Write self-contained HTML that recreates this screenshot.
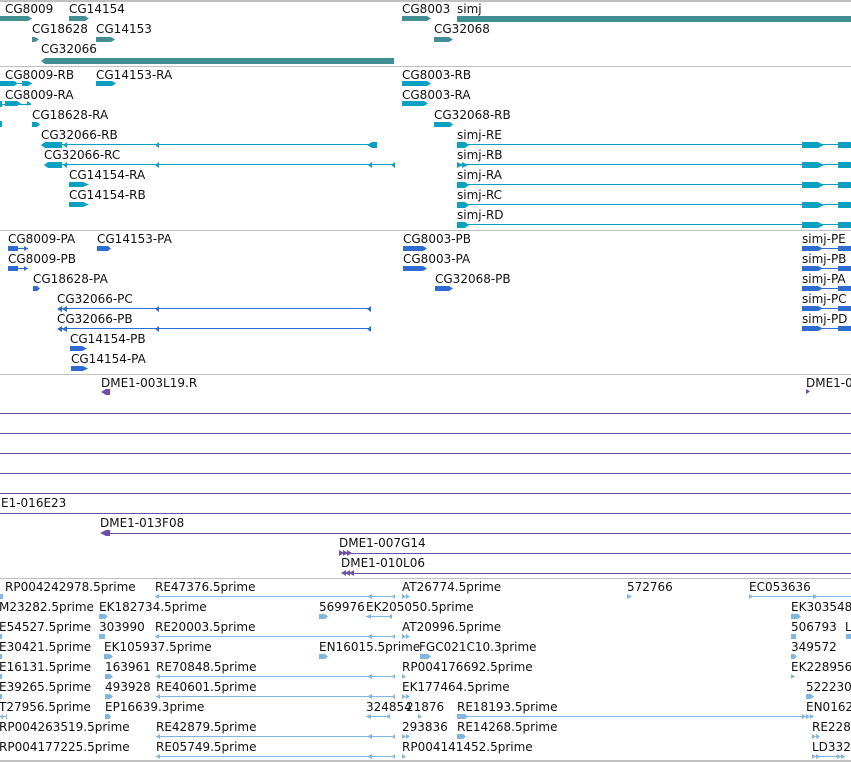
<!DOCTYPE html>
<html><head><meta charset="utf-8"><style>
html,body{margin:0;padding:0;background:#fff;}
svg{display:block;}
text{font-family:"DejaVu Sans","Liberation Sans",sans-serif;font-size:12px;fill:#111;}
.s{fill:#c0c0c0}
.t{fill:#418f93}.c{fill:#0aa0c1}.b{fill:#2e6bd3}.p{fill:#6f50a8}.l{fill:#80b6df}
</style></head><body>
<svg width="851" height="762" viewBox="0 0 851 762" xmlns="http://www.w3.org/2000/svg">
<!-- separators -->
<rect class="s" x="0" y="0" width="851" height="2"/>
<rect class="s" x="0" y="66" width="851" height="1"/>
<rect class="s" x="0" y="230" width="851" height="1"/>
<rect class="s" x="0" y="374" width="851" height="1"/>
<rect class="s" x="0" y="578" width="851" height="1"/>
<rect class="s" x="0" y="760" width="851" height="2"/>

<!-- TRACK 1 genes -->
<text x="5" y="13">CG8009</text><polygon class="t" points="0,16 28,16 32,18.5 28,21 0,21"/>
<text x="69" y="13">CG14154</text><polygon class="t" points="69,16 85,16 89,18.5 85,21 69,21"/>
<text x="402" y="13">CG8003</text><polygon class="t" points="402,16 427,16 431,18.5 427,21 402,21"/>
<text x="457" y="13">simj</text><rect class="t" x="457" y="16" width="394" height="6"/>
<text x="32" y="33">CG18628</text><polygon class="t" points="32,37 35,37 39,39.5 35,42 32,42"/>
<text x="96" y="33">CG14153</text><polygon class="t" points="96,37 111,37 115,39.5 111,42 96,42"/>
<text x="434" y="33">CG32068</text><polygon class="t" points="434,37 449,37 453,39.5 449,42 434,42"/>
<text x="41" y="53">CG32066</text><polygon class="t" points="45,58 394,58 394,64 45,64 41,61"/>

<!-- TRACK 2 transcripts -->
<g class="c">
<rect x="0" y="83" width="32" height="1"/><rect x="0" y="81" width="14" height="5"/><polygon points="14,81 18,83.5 14,86"/><rect x="22" y="81" width="6" height="5"/><polygon points="28,81 32,83.5 28,86"/>
<rect x="96" y="81" width="16" height="5"/><polygon points="112,81 116,83.5 112,86"/>
<rect x="402" y="81" width="25" height="5"/><polygon points="427,81 431,83.5 427,86"/>
<rect x="0" y="104" width="31" height="1"/><rect x="0" y="101" width="2" height="6"/><rect x="5" y="101" width="12" height="5"/><polygon points="17,101 21,103.5 17,106"/><polygon points="27,101 31,103.5 27,106"/>
<rect x="402" y="101" width="22" height="5"/><polygon points="424,101 428,103.5 424,106"/>
<rect x="0" y="121" width="2" height="6"/><rect x="32" y="122" width="5" height="5"/><polygon points="37,122 40,124.5 37,127"/>
<rect x="434" y="122" width="16" height="5"/><polygon points="450,122 453,124.5 450,127"/>
<!-- CG32066-RB -->
<polygon points="45,142 62,142 62,148 45,148 41,145"/><rect x="62" y="144" width="315" height="1"/><polygon points="67,142 63,145 67,148"/><polygon points="159,142 155,145 159,148"/><polygon points="372,142 377,142 377,148 372,148 367,145"/>
<!-- CG32066-RC -->
<polygon points="48,162 62,162 62,168 48,168 44,165"/><rect x="62" y="164" width="333" height="1"/><polygon points="67,162 63,165 67,168"/><polygon points="159,162 155,165 159,168"/><polygon points="372,162 368,165 372,168"/><polygon points="395,162 391,165 395,168"/>
<rect x="69" y="182" width="14" height="5"/><polygon points="83,182 89,184.5 83,187"/>
<rect x="69" y="202" width="14" height="5"/><polygon points="83,202 89,204.5 83,207"/>
</g>
<g class="c">
<rect x="457" y="144" width="394" height="1"/><rect x="457" y="142" width="8" height="6"/><polygon points="465,142 469,145 465,148"/><rect x="802" y="142" width="16" height="6"/><polygon points="818,142 824,145 818,148"/><rect x="838" y="142" width="13" height="6"/>
<rect x="457" y="164" width="394" height="1"/><polygon points="457,162 463,165 457,168"/><polygon points="462,162 468,165 462,168"/><rect x="802" y="162" width="16" height="6"/><polygon points="818,162 824,165 818,168"/><rect x="838" y="162" width="13" height="6"/>
<rect x="457" y="184" width="394" height="1"/><rect x="457" y="182" width="8" height="6"/><polygon points="465,182 469,185 465,188"/><rect x="802" y="182" width="16" height="6"/><polygon points="818,182 824,185 818,188"/><rect x="838" y="182" width="13" height="6"/>
<rect x="457" y="204" width="394" height="1"/><rect x="457" y="202" width="8" height="6"/><polygon points="465,202 469,205 465,208"/><rect x="802" y="202" width="16" height="6"/><polygon points="818,202 824,205 818,208"/><rect x="838" y="202" width="13" height="6"/>
<rect x="457" y="224" width="394" height="1"/><rect x="457" y="222" width="8" height="6"/><polygon points="465,222 469,225 465,228"/><rect x="802" y="222" width="16" height="6"/><polygon points="818,222 824,225 818,228"/><rect x="838" y="222" width="13" height="6"/>
</g>
<text x="5" y="79">CG8009-RB</text><text x="96" y="79">CG14153-RA</text><text x="402" y="79">CG8003-RB</text>
<text x="5" y="99">CG8009-RA</text><text x="402" y="99">CG8003-RA</text>
<text x="32" y="119">CG18628-RA</text><text x="434" y="119">CG32068-RB</text>
<text x="41" y="139">CG32066-RB</text><text x="457" y="139">simj-RE</text>
<text x="44" y="159">CG32066-RC</text><text x="457" y="159">simj-RB</text>
<text x="69" y="179">CG14154-RA</text><text x="457" y="179">simj-RA</text>
<text x="69" y="199">CG14154-RB</text><text x="457" y="199">simj-RC</text>
<text x="457" y="219">simj-RD</text>

<!-- TRACK 3 proteins -->
<g class="b">
<rect x="8" y="248" width="20" height="1"/><rect x="8" y="246" width="10" height="5"/><polygon points="24,246 28,248.5 24,251"/>
<rect x="97" y="246" width="11" height="5"/><polygon points="108,246 111,248.5 108,251"/>
<rect x="403" y="246" width="20" height="5"/><polygon points="423,246 427,248.5 423,251"/>
<rect x="8" y="268" width="20" height="1"/><rect x="8" y="266" width="10" height="5"/><polygon points="24,266 28,268.5 24,271"/>
<rect x="403" y="266" width="20" height="5"/><polygon points="423,266 427,268.5 423,271"/>
<rect x="33" y="286" width="4" height="5"/><polygon points="37,286 40,288.5 37,291"/>
<rect x="435" y="286" width="14" height="5"/><polygon points="449,286 453,288.5 449,291"/>
<polygon points="57,309 62,306 62,312"/><polygon points="62,309 67,306 67,312"/><rect x="62" y="308" width="309" height="1"/><polygon points="155,309 159,306 159,312"/><polygon points="367,309 371,306 371,312"/>
<polygon points="57,329 62,326 62,332"/><polygon points="62,329 67,326 67,332"/><rect x="62" y="328" width="309" height="1"/><polygon points="155,329 159,326 159,332"/><polygon points="367,329 371,326 371,332"/>
<rect x="70" y="346" width="12" height="5"/><polygon points="82,346 87,348.5 82,351"/>
<rect x="71" y="366" width="12" height="5"/><polygon points="83,366 88,368.5 83,371"/>
</g>
<g class="b">
<rect x="802" y="248" width="49" height="1"/><rect x="802" y="246" width="16" height="5"/><polygon points="818,246 823,248.5 818,251"/><rect x="838" y="246" width="13" height="5"/>
<rect x="802" y="268" width="49" height="1"/><rect x="802" y="266" width="16" height="5"/><polygon points="818,266 823,268.5 818,271"/><rect x="838" y="266" width="13" height="5"/>
<rect x="802" y="288" width="49" height="1"/><rect x="802" y="286" width="16" height="5"/><polygon points="818,286 823,288.5 818,291"/><rect x="838" y="286" width="13" height="5"/>
<rect x="802" y="308" width="49" height="1"/><rect x="802" y="306" width="16" height="5"/><polygon points="818,306 823,308.5 818,311"/><rect x="838" y="306" width="13" height="5"/>
<rect x="802" y="328" width="49" height="1"/><rect x="802" y="326" width="16" height="5"/><polygon points="818,326 823,328.5 818,331"/><rect x="838" y="326" width="13" height="5"/>
</g>
<text x="8" y="243">CG8009-PA</text><text x="97" y="243">CG14153-PA</text><text x="403" y="243">CG8003-PB</text><text x="802" y="243">simj-PE</text>
<text x="8" y="263">CG8009-PB</text><text x="403" y="263">CG8003-PA</text><text x="802" y="263">simj-PB</text>
<text x="33" y="283">CG18628-PA</text><text x="435" y="283">CG32068-PB</text><text x="802" y="283">simj-PA</text>
<text x="57" y="303">CG32066-PC</text><text x="802" y="303">simj-PC</text>
<text x="57" y="323">CG32066-PB</text><text x="802" y="323">simj-PD</text>
<text x="70" y="343">CG14154-PB</text>
<text x="71" y="363">CG14154-PA</text>

<!-- TRACK 4 BACs -->
<g class="p">
<polygon points="101,392 106,389 110,389 110,395 106,395"/>
<polygon points="806,389 810,391.5 806,394"/>
<rect x="0" y="413" width="851" height="1"/>
<rect x="0" y="433" width="851" height="1"/>
<rect x="0" y="453" width="851" height="1"/>
<rect x="0" y="473" width="851" height="1"/>
<rect x="0" y="493" width="851" height="1"/>
<rect x="0" y="513" width="851" height="1"/>
<rect x="104" y="533" width="747" height="1"/><polygon points="100,533 106,530 110,530 110,536 106,536"/>
<rect x="339" y="553" width="512" height="1"/><polygon points="339,550 344,553 339,556"/><polygon points="343,550 348,553 343,556"/><polygon points="347,550 352,553 347,556"/>
<rect x="344" y="573" width="507" height="1"/><polygon points="341,573 346,570 346,576"/><polygon points="345,573 350,570 350,576"/><polygon points="349,573 354,570 354,576"/>
</g>
<text x="101" y="387">DME1-003L19.R</text><text x="806" y="387">DME1-0</text>
<text x="1" y="507">E1-016E23</text>
<text x="100" y="527">DME1-013F08</text>
<text x="339" y="547">DME1-007G14</text>
<text x="341" y="567">DME1-010L06</text>

<!-- TRACK 5 ESTs -->
<g class="l">
<!-- long lines with arrows (RE rows) -->
<rect x="0" y="594" width="3" height="5"/>
<rect x="155" y="596" width="240" height="1"/><polygon points="155,596.5 159,594 159,599"/><polygon points="367,596.5 372,594 372,599"/><polygon points="392,596.5 395,594 395,599"/>
<polygon points="402,594 406,596.5 402,599"/><polygon points="406,594 410,596.5 406,599"/>
<polygon points="627,594 632,596.5 627,599"/>
<rect x="749" y="596" width="102" height="1"/><polygon points="749,594 753,596.5 749,599"/><polygon points="813,594 818,596.5 813,599"/>
<polygon points="99,614 105,614 108,616.5 105,619 99,619"/>
<polygon points="319,614 325,614 328,616.5 325,619 319,619"/>
<rect x="366" y="616" width="26" height="1"/><polygon points="366,616.5 371,614 371,619"/><polygon points="392,614 392,619 388,616.5"/>
<polygon points="791,614 798,614 801,616.5 798,619 791,619"/>
<rect x="0" y="634" width="2" height="5"/>
<rect x="99" y="634" width="6" height="5"/>
<rect x="155" y="636" width="240" height="1"/><polygon points="155,636.5 159,634 159,639"/><polygon points="367,636.5 372,634 372,639"/><polygon points="392,636.5 395,634 395,639"/>
<polygon points="402,634 406,636.5 402,639"/><polygon points="406,634 410,636.5 406,639"/>
<rect x="791" y="634" width="5" height="5"/><rect x="846" y="634" width="5" height="5"/>
<rect x="0" y="654" width="2" height="5"/>
<polygon points="104,654 110,654 113,656.5 110,659 104,659"/>
<polygon points="319,654 325,654 328,656.5 325,659 319,659"/>
<polygon points="420,654 428,654 431,656.5 428,659 420,659"/>
<polygon points="791,654 794,654 797,656.5 794,659 791,659"/>
<rect x="0" y="674" width="2" height="5"/>
<polygon points="105,674 110,674 113,676.5 110,679 105,679"/>
<rect x="156" y="676" width="239" height="1"/><polygon points="156,676.5 160,674 160,679"/><polygon points="367,676.5 372,674 372,679"/><polygon points="392,676.5 395,674 395,679"/>
<polygon points="402,674 406,676.5 402,679"/>
<polygon points="791,674 795,676.5 791,679"/>
<rect x="0" y="694" width="2" height="5"/>
<polygon points="105,694 110,694 113,696.5 110,699 105,699"/>
<rect x="156" y="696" width="239" height="1"/><polygon points="156,696.5 160,694 160,699"/><polygon points="367,696.5 372,694 372,699"/><polygon points="392,696.5 395,694 395,699"/>
<polygon points="402,694 406,696.5 402,699"/><polygon points="406,694 410,696.5 406,699"/>
<polygon points="806,694 811,694 814,696.5 811,699 806,699"/>
<rect x="0" y="716" width="6" height="1"/><polygon points="0,716.5 3,714 3,719"/><rect x="6" y="714" width="1" height="5"/>
<polygon points="105,714 109,714 111,716.5 109,719 105,719"/>
<rect x="366" y="716" width="24" height="1"/><polygon points="366,716.5 371,714 371,719"/><polygon points="390,714 390,719 386,716.5"/>
<polygon points="418,714 422,716.5 418,719"/>
<rect x="457" y="716" width="349" height="1"/><polygon points="457,714 465,714 468,716.5 465,719 457,719"/><polygon points="802,714 806,716.5 802,719"/><polygon points="806,714 810,716.5 806,719"/><polygon points="810,714 814,716.5 810,719"/>
<rect x="156" y="736" width="239" height="1"/><polygon points="156,736.5 160,734 160,739"/><polygon points="367,736.5 372,734 372,739"/><polygon points="392,736.5 395,734 395,739"/>
<polygon points="402,734 406,736.5 402,739"/><polygon points="406,734 410,736.5 406,739"/>
<polygon points="457,734 463,734 466,736.5 463,739 457,739"/>
<polygon points="812,734 816,736.5 812,739"/><polygon points="816,734 820,736.5 816,739"/>
<rect x="156" y="756" width="239" height="1"/><polygon points="156,756.5 160,754 160,759"/><polygon points="367,756.5 372,754 372,759"/><polygon points="392,756.5 395,754 395,759"/>
<polygon points="402,754 406,756.5 402,759"/>
<rect x="812" y="756" width="33" height="1"/><polygon points="812,754 816,756.5 812,759"/><polygon points="816,754 820,756.5 816,759"/><polygon points="837,754 841,756.5 837,759"/><polygon points="841,754 845,756.5 841,759"/>
</g>
<text x="5" y="591">RP004242978.5prime</text><text x="155" y="591">RE47376.5prime</text><text x="402" y="591">AT26774.5prime</text><text x="627" y="591">572766</text><text x="749" y="591">EC053636</text>
<text x="-1" y="611">M23282.5prime</text><text x="99" y="611">EK182734.5prime</text><text x="319" y="611">569976</text><text x="366" y="611">EK205050.5prime</text><text x="791" y="611">EK303548</text>
<text x="-1" y="631">E54527.5prime</text><text x="99" y="631">303990</text><text x="155" y="631">RE20003.5prime</text><text x="402" y="631">AT20996.5prime</text><text x="791" y="631">506793</text><text x="845" y="631">L</text>
<text x="-1" y="651">E30421.5prime</text><text x="104" y="651">EK105937.5prime</text><text x="319" y="651">EN16015.5prime</text><text x="419" y="651">FGC021C10.3prime</text><text x="791" y="651">349572</text>
<text x="-1" y="671">E16131.5prime</text><text x="105" y="671">163961</text><text x="156" y="671">RE70848.5prime</text><text x="402" y="671">RP004176692.5prime</text><text x="791" y="671">EK228956</text>
<text x="-1" y="691">E39265.5prime</text><text x="105" y="691">493928</text><text x="156" y="691">RE40601.5prime</text><text x="402" y="691">EK177464.5prime</text><text x="806" y="691">522230</text>
<text x="-1" y="711">T27956.5prime</text><text x="105" y="711">EP16639.3prime</text><text x="366" y="711">324854</text><text x="406" y="711">21876</text><text x="457" y="711">RE18193.5prime</text><text x="806" y="711">EN0162</text>
<text x="-1" y="731">RP004263519.5prime</text><text x="156" y="731">RE42879.5prime</text><text x="402" y="731">293836</text><text x="457" y="731">RE14268.5prime</text><text x="812" y="731">RE228</text>
<text x="-1" y="751">RP004177225.5prime</text><text x="156" y="751">RE05749.5prime</text><text x="402" y="751">RP004141452.5prime</text><text x="812" y="751">LD332</text>
</svg>
</body></html>
